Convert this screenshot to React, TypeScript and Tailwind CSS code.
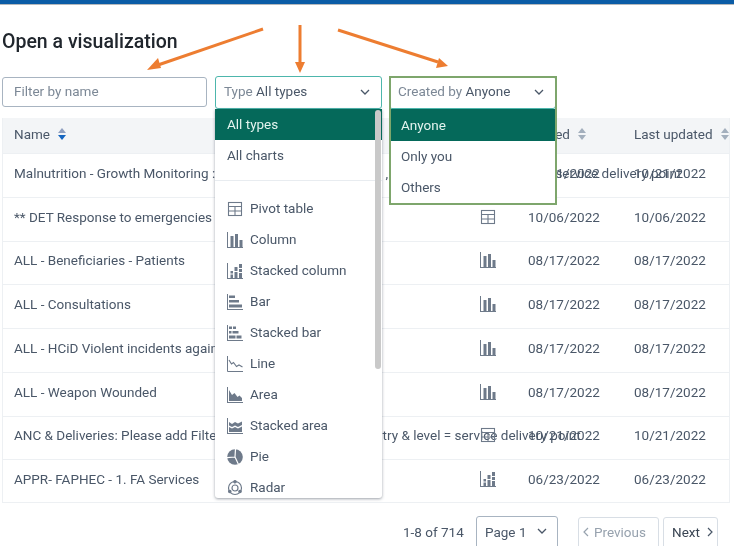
import React from "react";

const TXT = "text-[#4a5768]";

function PivotIcon({ c = "#6e7a8a" }: { c?: string }) {
  return (
    <svg width="16" height="16" viewBox="0 0 16 16" fill="none" stroke={c} strokeWidth="1.100">
      <rect x="1.500" y="1.500" width="13" height="13" />
      <path d="M1.500 5.500h13M1.500 10h13M8 5.500v9" />
    </svg>
  );
}
function ColumnIcon({ c = "#6e7a8a" }: { c?: string }) {
  return (
    <svg width="16" height="16" viewBox="0 0 16 16" fill={c}>
      <path d="M0 0h1v15h15v1H0z" />
      <rect x="3.500" y="4" width="3" height="11" />
      <rect x="8" y="2" width="3" height="13" />
      <rect x="12.500" y="8" width="3" height="7" />
    </svg>
  );
}
function StackedColumnIcon({ c = "#6e7a8a" }: { c?: string }) {
  return (
    <svg width="16" height="16" viewBox="0 0 16 16" fill={c}>
      <path d="M0 0h1v15h15v1H0z" />
      <path d="M3.500 8h2.500v2.500H3.500zM3.500 11.500h2.500V15H3.500zM7.500 4h3v4H7.500zM7.500 9h3v6h-3zM12 1h3v4h-3zM12 6h3v3h-3zM12 10h3v5h-3z" />
    </svg>
  );
}
function BarIcon({ c = "#6e7a8a" }: { c?: string }) {
  return (
    <svg width="16" height="16" viewBox="0 0 16 16" fill={c}>
      <path d="M0 0h1v15h15v1H0z" />
      <rect x="2" y="1.500" width="6" height="2.500" />
      <rect x="2" y="6" width="10" height="2.500" />
      <rect x="2" y="10.500" width="13" height="3" />
    </svg>
  );
}
function StackedBarIcon({ c = "#6e7a8a" }: { c?: string }) {
  return (
    <svg width="16" height="16" viewBox="0 0 16 16" fill={c}>
      <path d="M0 0h1v15h15v1H0z" />
      <path d="M2 1.500h3v2.500H2zM6 1.500h3v2.500H6zM2 6h2.500v2.500H2zM5.500 6h6v2.500h-6zM2 10.500h6.500v3H2zM9.500 10.500h5v3h-5z" />
    </svg>
  );
}
function LineIcon({ c = "#6e7a8a" }: { c?: string }) {
  return (
    <svg width="16" height="16" viewBox="0 0 16 16" fill="none" stroke={c}>
      <path d="M.5 0v15.500H16" />
      <path d="M2 4l2.500 4 2-1.500 3 4 2.500-1.500 3.500 2" strokeWidth="1.200" />
    </svg>
  );
}
function AreaIcon({ c = "#6e7a8a" }: { c?: string }) {
  return (
    <svg width="16" height="16" viewBox="0 0 16 16" fill={c}>
      <path d="M0 0h1v15h15v1H0z" />
      <path d="M2 3l3 5 2.500-2 3 4 2-1.500 2.500 2.500V14H2z" />
    </svg>
  );
}
function StackedAreaIcon({ c = "#6e7a8a" }: { c?: string }) {
  return (
    <svg width="16" height="16" viewBox="0 0 16 16" fill={c}>
      <path d="M0 0h1v15h15v1H0z" />
      <path d="M2 4l3 2 3-2 3 1.500 4-2V7L11 9 8 7.500 5 9 2 7.500zM2 9l3 1.500 3-1.500 3 1.500 4-2V14H2z" />
    </svg>
  );
}
function PieIcon({ c = "#6e7a8a" }: { c?: string }) {
  return (
    <svg width="16" height="16" viewBox="0 0 16 16">
      <circle cx="8" cy="8" r="7.800" fill={c} />
      <path d="M8 8L8.500 0M8 8L0 8.700M8 8l3.500 7.500" stroke="#fff" strokeWidth="1.200" fill="none" />
    </svg>
  );
}
function RadarIcon({ c = "#6e7a8a" }: { c?: string }) {
  return (
    <svg width="16" height="16" viewBox="0 0 16 16" fill="none" stroke={c} strokeWidth="1.200">
      <circle cx="8" cy="8" r="6.500" />
      <circle cx="8" cy="8" r="3" />
      <circle cx="8" cy="1.800" r="1.200" fill={c} />
      <circle cx="2.800" cy="11.500" r="1.200" fill={c} />
      <circle cx="13" cy="11.500" r="1.200" fill={c} />
    </svg>
  );
}

function Chevron({ c = "#4a5768" }: { c?: string }) {
  return (
    <svg width="10" height="6" viewBox="0 0 10 6" fill="none" stroke={c} strokeWidth="1.300">
      <path d="M1 1l4 4 4-4" />
    </svg>
  );
}
function ChevronSide({ c, dir }: { c: string; dir: "left" | "right" }) {
  return (
    <svg width="6" height="10" viewBox="0 0 6 10" fill="none" stroke={c} strokeWidth="1.200">
      <path d={dir === "left" ? "M5 1L1 5l4 4" : "M1 1l4 4-4 4"} />
    </svg>
  );
}

function Sort({ active = false }: { active?: boolean }) {
  return (
    <svg width="8" height="12" viewBox="0 0 8 12">
      <path d="M4 0l4 5H0z" fill={active ? "#8fa0c0" : "#a3afbd"} />
      <path d="M4 12l4-5H0z" fill={active ? "#1565c0" : "#a3afbd"} />
    </svg>
  );
}

const rows: { name: string; icon: React.ReactNode; created: string; updated: string }[] = [
  { name: "Malnutrition - Growth Monitoring : Please add Filters for users , org. units, country & level = service delivery point", icon: <PivotIcon />, created: "10/21/2022", updated: "10/21/2022" },
  { name: "** DET Response to emergencies", icon: <PivotIcon />, created: "10/06/2022", updated: "10/06/2022" },
  { name: "ALL - Beneficiaries - Patients", icon: <ColumnIcon />, created: "08/17/2022", updated: "08/17/2022" },
  { name: "ALL - Consultations", icon: <ColumnIcon />, created: "08/17/2022", updated: "08/17/2022" },
  { name: "ALL - HCiD Violent incidents against health care", icon: <ColumnIcon />, created: "08/17/2022", updated: "08/17/2022" },
  { name: "ALL - Weapon Wounded", icon: <ColumnIcon />, created: "08/17/2022", updated: "08/17/2022" },
  { name: "ANC & Deliveries: Please add Filters for users, org. units, country & level = service delivery point", icon: <PivotIcon />, created: "10/21/2022", updated: "10/21/2022" },
  { name: "APPR- FAPHEC - 1. FA Services", icon: <StackedColumnIcon />, created: "06/23/2022", updated: "06/23/2022" },
];

const typeItems: { label: string; icon: React.ReactNode }[] = [
  { label: "Pivot table", icon: <PivotIcon /> },
  { label: "Column", icon: <ColumnIcon /> },
  { label: "Stacked column", icon: <StackedColumnIcon /> },
  { label: "Bar", icon: <BarIcon /> },
  { label: "Stacked bar", icon: <StackedBarIcon /> },
  { label: "Line", icon: <LineIcon /> },
  { label: "Area", icon: <AreaIcon /> },
  { label: "Stacked area", icon: <StackedAreaIcon /> },
  { label: "Pie", icon: <PieIcon /> },
  { label: "Radar", icon: <RadarIcon /> },
];

export default function App() {
  return (
    <div className={`relative h-[546px] w-[734px] overflow-hidden bg-white font-['Roboto',sans-serif] text-[13.5px] blur-[0.35px] ${TXT}`}>
      {/* top bar */}
      <div className="h-[4px] bg-[#0b5ca6]" />
      <div className="h-[1px] bg-[#b5b8bb]" />
      <div className="flex h-[3px] justify-start overflow-hidden pl-[432px]">
        <span className="-mt-[11px] text-[13px] leading-[14px] text-[#8a8f96]">Data Visualization</span>
      </div>

      {/* title */}
      <h1 className="mt-[21px] ml-[2px] h-[26px] text-[19.5px] leading-[26px] font-medium text-[#20262d]">Open a visualization</h1>

      {/* filters */}
      <div className="mt-[21px] ml-[2px] flex h-[33px] items-start">
        <div className="mt-[1px] flex h-[30px] w-[205px] items-center rounded-[3px] border border-[#a8b4c1] pb-[1px] pl-[11px] text-[#7c8896]">Filter by name</div>
        <div className="ml-[8px] flex h-[33px] w-[167px] items-center justify-between rounded-[3px] border border-[#4db6ac] pr-[11px] pb-[2px] pl-[8px]">
          <span><span className="text-[#7c8896]">Type</span> All types</span>
          <Chevron />
        </div>
        <div className="ml-[7px] flex h-[33px] w-[167px] items-center justify-between rounded-[3px] border border-[#4db6ac] pr-[11px] pb-[2px] pl-[8px]">
          <span><span className="text-[#7c8896]">Created by</span> Anyone</span>
          <Chevron />
        </div>
      </div>

      {/* table */}
      <div className="mt-[9px] ml-[2px] w-[728px] border-x border-[#edf0f3]">
        <div className="flex h-[35px] items-center bg-[#f3f5f7] pb-[3px]">
          <div className="flex w-[467px] items-center gap-[8px] pl-[11px]">Name <Sort active /></div>
          <div className="flex w-[158px] items-center gap-[8px] pl-[53px]">Created <Sort /></div>
          <div className="flex items-center gap-[8px] pl-[6px] whitespace-nowrap">Last updated <Sort /></div>
        </div>
        {rows.map((r) => (
          <div key={r.name} className="flex h-[43.75px] items-center border-t border-[#edf0f3] pb-[5px] last:border-b">
            <div className="w-[467px] whitespace-nowrap pl-[11px]">{r.name}</div>
            <div className="w-[58px] pl-[10px]">{r.icon}</div>
            <div className="w-[106px]">{r.created}</div>
            <div>{r.updated}</div>
          </div>
        ))}
      </div>

      {/* pagination */}
      <div className="mt-[13px] flex h-[40px] items-start pl-[403px]">
        <span className="mt-[6px] w-[73px]">1-8 of 714</span>
        <div className="flex h-[40px] w-[82px] items-start justify-between rounded-[3px] border border-[#a8b4c1] pt-[5px] pr-[10px] pl-[8px]">
          Page 1 <span className="mt-[6px]"><Chevron /></span>
        </div>
        <div className="mt-[1px] ml-[20px] flex h-[40px] w-[81px] items-start gap-[5px] rounded-[3px] border border-[#d8dee5] pt-[4px] pl-[4px] text-[#97a2ae]">
          <span className="mt-[5px]"><ChevronSide c="#97a2ae" dir="left" /></span> Previous
        </div>
        <div className="mt-[1px] ml-[4px] flex h-[40px] w-[55px] items-start gap-[7px] rounded-[3px] border border-[#d8dee5] pt-[4px] pl-[8px] text-[#3a4553]">
          Next <span className="mt-[5px]"><ChevronSide c="#4a5768" dir="right" /></span>
        </div>
      </div>

      {/* Type dropdown */}
      <div className="absolute top-[109px] left-[215px] h-[389px] w-[167px] overflow-hidden rounded-b-[3px] bg-white shadow-[0_1px_3px_rgba(60,70,85,0.5)]">
        <div className="flex h-[31px] items-center bg-[#05695a] pl-[12px] text-[#e3f4ef]">All types</div>
        <div className="flex h-[31px] items-center pl-[12px]">All charts</div>
        <div className="mt-[9px] border-t border-[#e8ecf0] pt-[12px]">
          {typeItems.map((it) => (
            <div key={it.label} className="flex h-[31px] items-center gap-[7px] pl-[12px]">
              <span className="flex w-[16px]">{it.icon}</span>
              {it.label}
            </div>
          ))}
        </div>
        <div className="absolute top-[1px] right-[1px] h-[259px] w-[6px] rounded-[3px] bg-[#c9c9c9]" />
      </div>

      {/* Created by dropdown */}
      <div className="absolute top-[76px] left-[389px] h-[129px] w-[168px] border-2 border-[#7ea66c]">
        <div className="h-[31px]" />
        <div className="flex h-[32px] items-center bg-[#05695a] pl-[10px] text-[#e3f4ef]">Anyone</div>
        <div className="bg-white">
          <div className="flex h-[31px] items-center pl-[10px]">Only you</div>
          <div className="flex h-[31px] items-center pl-[10px]">Others</div>
        </div>
      </div>

      {/* orange arrows */}
      <svg className="pointer-events-none absolute top-0 left-0" width="734" height="110" fill="#ed7d31" stroke="none">
        <path d="M263 29L158 65" stroke="#ed7d31" strokeWidth="3" />
        <path d="M147 70L158 58l3 10z" />
        <path d="M300 25V64" stroke="#ed7d31" strokeWidth="3" />
        <path d="M300 73l-5-11h10z" />
        <path d="M338 30L438 62" stroke="#ed7d31" strokeWidth="3" />
        <path d="M448 66l-9-8-3 10z" />
      </svg>
    </div>
  );
}
